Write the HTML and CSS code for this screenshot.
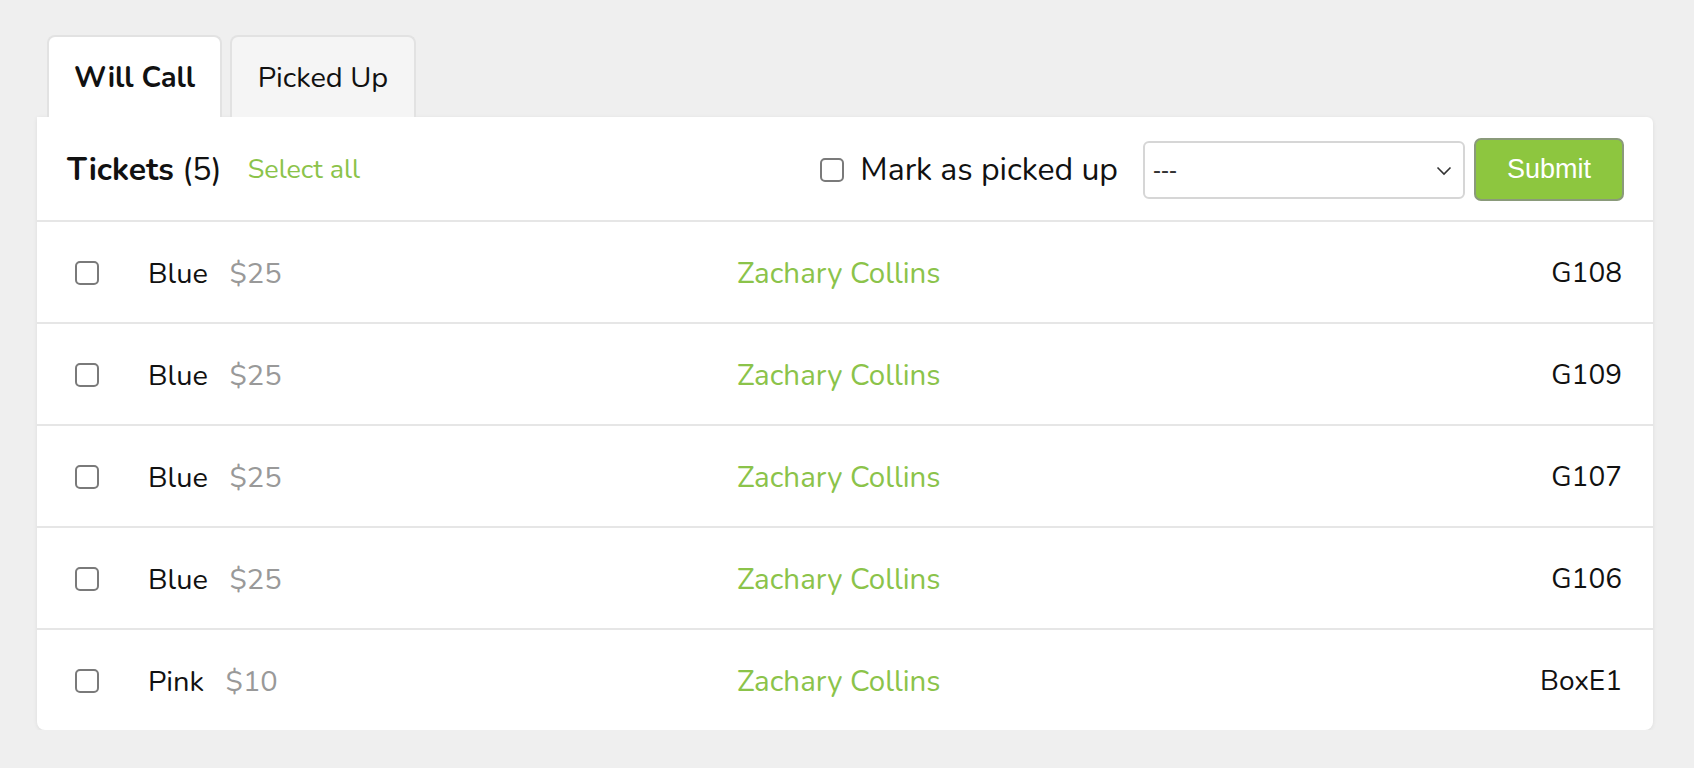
FILE: index.html
```html
<!DOCTYPE html>
<html>
<head>
<meta charset="utf-8">
<link rel="stylesheet" href="styles.css">
</head>
<body>
<div class="page">
  <div class="tabs">
    <div class="tab active">Will Call</div>
    <div class="tab">Picked Up</div>
  </div>
  <div class="card">
    <div class="card-head">
      <div class="title"><b>Tickets</b> (5)</div>
      <a class="select-all">Select all</a>
      <div class="spacer"></div>
      <label class="mark"><span class="cb"></span>Mark as picked up</label>
      <div class="select-wrap">
        <div class="select">---</div>
        <svg class="chev" width="16" height="10" viewBox="0 0 16 10"><path d="M1.5 1.5 L8 8 L14.5 1.5" fill="none" stroke="#333" stroke-width="1.6"/></svg>
      </div>
      <button class="submit">Submit</button>
    </div>
    <div class="row"><span class="cb"></span><div class="item">Blue <span class="price">$25</span></div><div class="name">Zachary Collins</div><div class="seat">G108</div></div>
    <div class="row"><span class="cb"></span><div class="item">Blue <span class="price">$25</span></div><div class="name">Zachary Collins</div><div class="seat">G109</div></div>
    <div class="row"><span class="cb"></span><div class="item">Blue <span class="price">$25</span></div><div class="name">Zachary Collins</div><div class="seat">G107</div></div>
    <div class="row"><span class="cb"></span><div class="item">Blue <span class="price">$25</span></div><div class="name">Zachary Collins</div><div class="seat">G106</div></div>
    <div class="row"><span class="cb"></span><div class="item">Pink <span class="price">$10</span></div><div class="name">Zachary Collins</div><div class="seat">BoxE1</div></div>
  </div>
</div>
</body>
</html>
```

FILE: styles.css
```css
html, body {
  margin: 0;
  padding: 0;
  background: #efefef;
  font-family: "Nunito", "Lato", "Noto Sans", sans-serif;
  color: #111;
}
.page {
  padding: 35px 41px 0 37px;
}
.tabs {
  display: flex;
  gap: 8px;
  padding-left: 10px;
}
.tab {
  width: 175px;
  height: 82px;
  box-sizing: border-box;
  border: 2px solid #e2e2e2;
  border-bottom: none;
  border-radius: 8px 8px 0 0;
  background: #f5f5f5;
  display: flex;
  align-items: center;
  justify-content: center;
  font-size: 29px;
}
.tab.active {
  background: #fff;
  font-weight: 700;
  width: 175px;
}
.tab:nth-child(2) { width: 186px; }
.card {
  background: #fff;
  border-radius: 0 6px 8px 8px;
  box-shadow: 0 1px 4px rgba(0,0,0,0.08);
  width: 1616px;
}
.card-head {
  height: 105px;
  box-sizing: border-box;
  display: flex;
  align-items: center;
  padding: 2px 29px 0 30px;
  border-bottom: 2px solid #e6e6e6;
}
.title {
  font-size: 32px;
}
.title b { font-weight: 700; }
.select-all {
  margin-left: 26px;
  color: #8bc34a;
  font-size: 27px;
}
.spacer { flex: 1; }
.mark {
  display: flex;
  align-items: center;
  gap: 16px;
  font-size: 32px;
}
.cb {
  display: inline-block;
  width: 24px;
  height: 24px;
  box-sizing: border-box;
  border: 2px solid #7a7a7a;
  border-radius: 5px;
  background: #fff;
  flex: none;
}
.select-wrap {
  position: relative;
  margin-left: 25px;
}
.select {
  width: 322px;
  height: 58px;
  box-sizing: border-box;
  border: 2px solid #d6d6d6;
  border-radius: 6px;
  display: flex;
  align-items: center;
  padding-left: 8px;
  font-family: "Liberation Sans", Arial, sans-serif;
  font-size: 24px;
  color: #333;
}
.chev {
  position: absolute;
  right: 13px;
  top: 25px;
}
.submit {
  margin-left: 9px;
  width: 150px;
  height: 63px;
  background: #8dc63f;
  border: 2px solid #8a9a7a;
  border-radius: 7px;
  color: #fff;
  font-family: "Liberation Sans", Arial, sans-serif;
  font-size: 27px;
}
.row {
  display: grid;
  grid-template-columns: 73px 589px 1fr auto;
  align-items: center;
  height: 102px;
  box-sizing: border-box;
  padding: 2px 31px 0 38px;
  border-bottom: 2px solid #e6e6e6;
  font-size: 29px;
}
.row:last-child { border-bottom: none; height: 100px; }
.price {
  color: #999;
  margin-left: 14px;
}
.name {
  color: #8bc34a;
  font-size: 29.5px;
}
.seat {
  text-align: right;
  font-size: 28px;
}
```
